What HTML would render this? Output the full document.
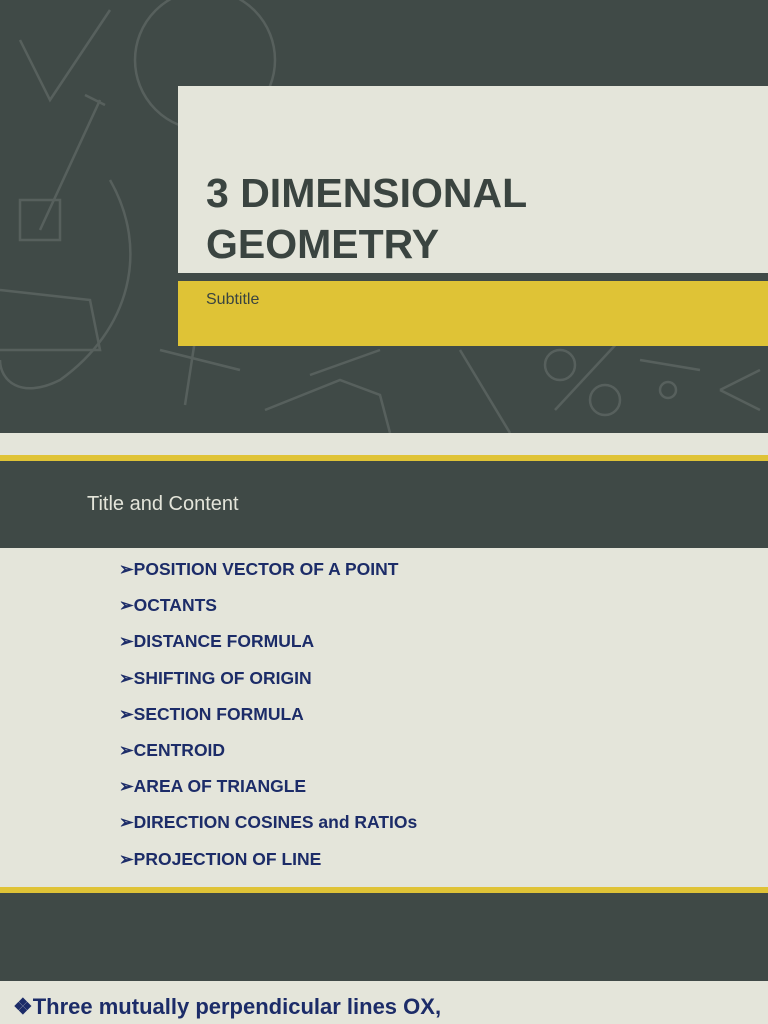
<!DOCTYPE html>
<html><head><meta charset="utf-8"><style>
*{margin:0;padding:0;box-sizing:border-box}
body{width:768px;height:1024px;overflow:hidden;background:#e4e5da;font-family:"Liberation Sans",sans-serif;position:relative}
.dark{position:absolute;left:0;width:768px;background:#3f4946}
.y{position:absolute;left:0;width:768px;background:#dfc336}
.abs{position:absolute}
li{list-style:none}
</style></head><body>
<div class="dark" style="top:0;height:433px;background:#404a47"></div>
<svg class="abs" style="left:0;top:0" width="768" height="433">
<g stroke="#8e9591" stroke-width="2.5" fill="none" opacity="0.3">
<circle cx="205" cy="60" r="70"/>
<path d="M20 40 L50 100 L110 10"/>
<path d="M100 100 L40 230 M85 95 L105 105"/>
<rect x="20" y="200" width="40" height="40"/>
<path d="M110 180 C150 250 130 330 60 380 C20 400 0 380 0 360"/>
<path d="M0 290 L90 300 L100 350 L0 350"/>
<path d="M160 350 L240 370 M195 340 L185 405"/>
<path d="M265 410 L340 380 L380 395 L390 433"/>
<path d="M310 375 L380 350 M460 350 L510 433"/>
<circle cx="560" cy="365" r="15"/><circle cx="605" cy="400" r="15"/>
<path d="M555 410 L620 340"/>
<path d="M640 360 L700 370 M720 390 L760 370 M720 390 L760 410"/>
<circle cx="668" cy="390" r="8"/>
</g>
</svg>
<div class="abs" style="left:178px;top:86px;width:590px;height:187px;background:#e4e5da"></div>
<div class="abs" style="left:178px;top:281px;width:590px;height:65px;background:#dfc336"></div>
<div class="abs" style="left:206px;top:168px;font-size:41px;font-weight:bold;color:#3a4440;line-height:51px">3 DIMENSIONAL<br>GEOMETRY</div>
<div class="abs" style="left:206px;top:291px;font-size:16px;color:#3a4440">Subtitle</div>

<div class="y" style="top:455px;height:6px"></div>
<div class="dark" style="top:461px;height:87px"></div>
<div class="abs" style="left:87px;top:493px;font-size:20px;color:#e4e5da">Title and Content</div>
<ul class="abs" style="left:119px;top:551px;font-size:17.5px;font-weight:bold;color:#1c2c68;line-height:36.2px">
<li>➢POSITION VECTOR OF A POINT</li>
<li>➢OCTANTS</li>
<li>➢DISTANCE FORMULA</li>
<li>➢SHIFTING OF ORIGIN</li>
<li>➢SECTION FORMULA</li>
<li>➢CENTROID</li>
<li>➢AREA OF TRIANGLE</li>
<li>➢DIRECTION COSINES and RATIOs</li>
<li>➢PROJECTION OF LINE</li>
</ul>
<div class="y" style="top:887px;height:6px"></div>
<div class="dark" style="top:893px;height:88px"></div>
<div class="abs" style="left:13px;top:994px;font-size:22px;font-weight:bold;color:#1c2c68">❖Three mutually perpendicular lines OX,</div>
</body></html>
